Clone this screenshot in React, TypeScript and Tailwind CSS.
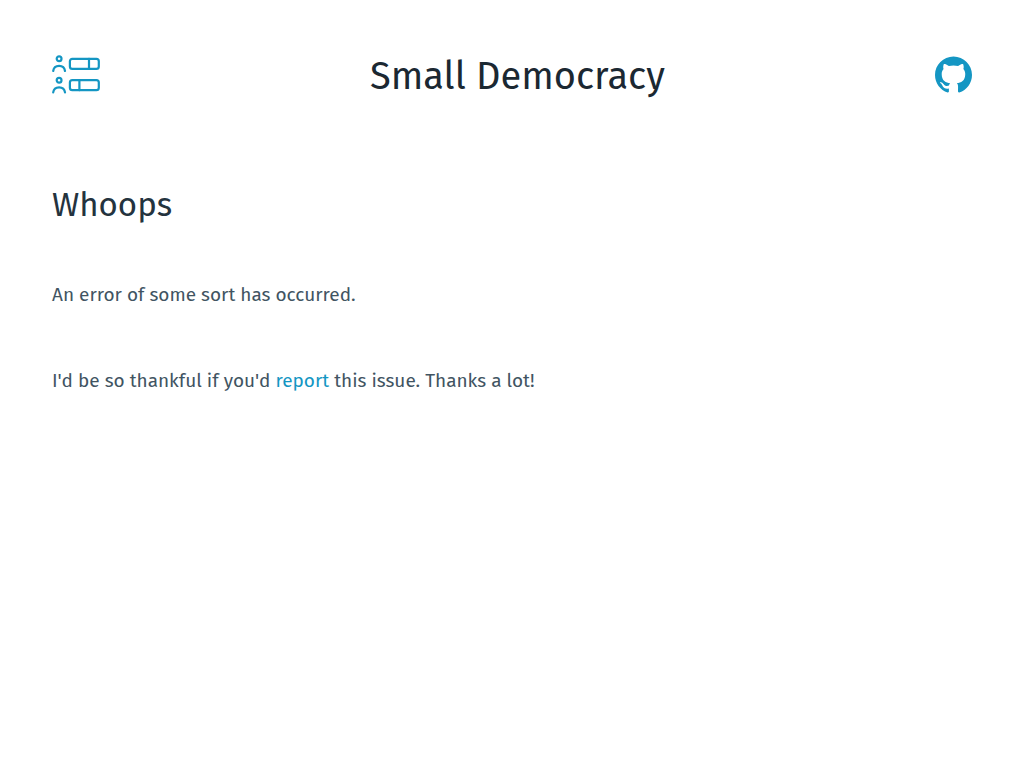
import { SiGithub } from "react-icons/si";

function Logo() {
  return (
    <svg
      viewBox="0 0 48 40"
      className="h-10 w-12"
      fill="none"
      stroke="currentColor"
      strokeWidth="2.2"
      strokeLinecap="round"
      strokeLinejoin="round"
      aria-hidden="true"
    >
      <circle cx="7.1" cy="4.8" r="2.4" />
      <path d="M1.2 17c.4-3 2.8-5.1 5.9-5.1s5.500 2.100 5.900 5.100" />
      <rect x="17.9" y="4.8" width="28.9" height="10" rx="2.4" />
      <path d="M37 4.8v10" />
      <circle cx="7.1" cy="26.2" r="2.4" />
      <path d="M1.2 38.400c.4-3 2.8-5.1 5.9-5.1s5.500 2.100 5.900 5.100" />
      <rect x="17.9" y="26.2" width="28.9" height="10" rx="2.4" />
      <path d="M27.4 26.2v10" />
    </svg>
  );
}

export default function App() {
  return (
    <div className="min-h-screen bg-white px-[52px] pt-12 font-['Fira_Sans','Noto_Sans',sans-serif] text-[19px] text-[#415462]">
      <header className="flex h-14 items-start justify-between">
        <a href="/" aria-label="Home" className="pt-1.5 text-[#1496c3]">
          <Logo />
        </a>
        <h1 className="text-[38px] leading-14 font-normal text-[#1b2832]">Small Democracy</h1>
        <a href="https://github.com" aria-label="GitHub" className="pt-2 text-[#1496c3]">
          <SiGithub size={37} />
        </a>
      </header>
      <main className="pt-20">
        <h2 className="text-[33px] leading-[42px] font-normal text-[#24333e]">Whoops</h2>
        <p className="mt-[54px] leading-[30px]">An error of some sort has occurred.</p>
        <p className="mt-14 leading-[30px]">
          I'd be so thankful if you'd{" "}
          <a href="/report" className="text-[#1496c3]">
            report
          </a>{" "}
          this issue. Thanks a lot!
        </p>
      </main>
    </div>
  );
}
